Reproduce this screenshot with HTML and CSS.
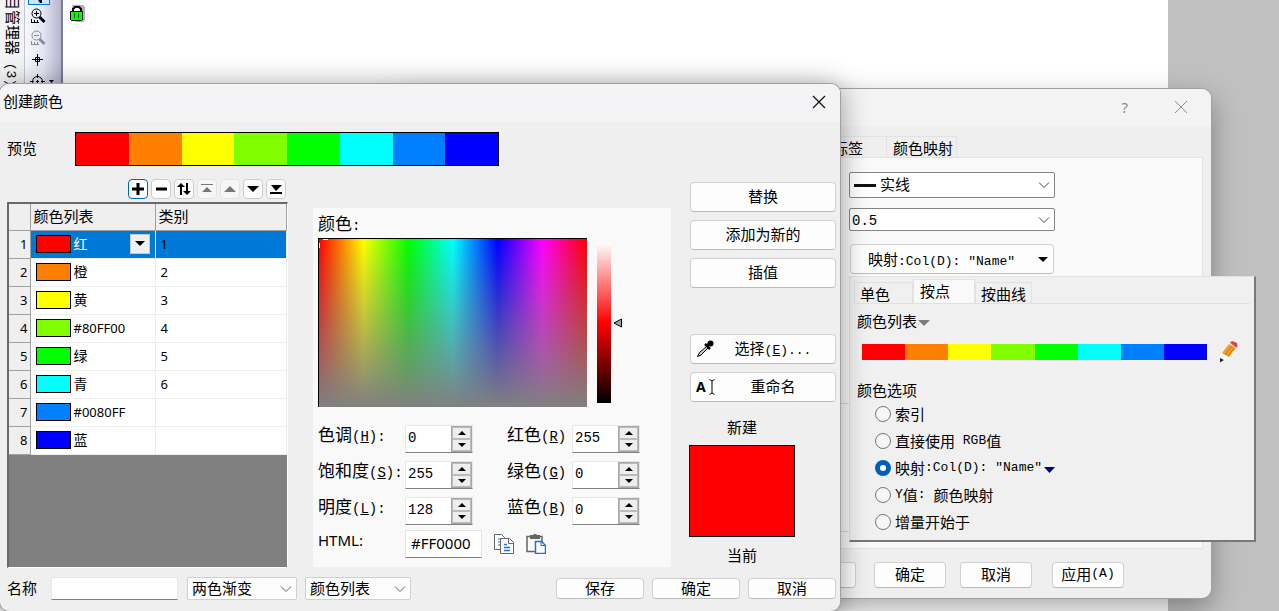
FILE: index.html
```html
<!DOCTYPE html>
<html lang="zh-CN">
<head>
<meta charset="utf-8">
<title>创建颜色</title>
<link rel="stylesheet" href="styles.css">
</head>
<body>
<div class="desktop">
  <div class="app">
    <div class="dock">目管理器<span class="mono"> (3)</span></div>
    <div class="tools">
      <span class="tool-on"><svg width="8" height="8" viewBox="0 0 8 8"><path d="M3 0h4v3H5z" fill="#000"/></svg></span>
      <svg width="18" height="20" viewBox="0 0 18 20" fill="none" stroke="#000"><circle cx="6.500" cy="6.500" r="4.500"/><path d="M4 6.500h5M6.500 4v5"/><path d="M9.500 10l5 5" stroke-width="3"/><path d="M1.500 12v4M1 15.500h8M4.500 13v2M7.500 13v2"/></svg>
      <svg width="18" height="20" viewBox="0 0 18 20" fill="none" stroke="#8a8a98"><circle cx="6.500" cy="6.500" r="4.500"/><path d="M4 6.500h5"/><path d="M9.500 10l5 5" stroke-width="3"/><path d="M1.500 12v4M1 15.500h8M4.500 13v2M7.500 13v2"/></svg>
      <svg width="18" height="20" viewBox="0 0 18 20" fill="none" stroke="#000"><path d="M2 8.500h11M7.500 3v12M5.500 6.500h4v4h-4z"/></svg>
      <svg width="28" height="20" viewBox="0 0 28 20" fill="none" stroke="#000"><circle cx="7.500" cy="8.500" r="5"/><path d="M0 8.500h4M6 8.500h3M11 8.500h4M7.500 1v4M7.500 7v3M7.500 12v4"/><path d="M19 7h5l-2.500 3z" fill="#000" stroke="none"/></svg>
    </div>
    <div class="sheet">
      <svg width="17" height="17" viewBox="0 0 17 17"><path d="M3 0h11l2 2v13l-2 2H6z" fill="#b0b0b0"/><path d="M4 7V4l2-2h4l2 2v3" fill="#fff" stroke="#000" stroke-width="2"/><path d="M1.500 6.500h12v8l-1 1h-10l-1-1z" fill="#0f0" stroke="#000"/><path d="M5.500 8v5M9.500 8v5" stroke="#052"/></svg>
    </div>
    <div class="workspace"></div>
  </div>

  <section class="window plot" aria-label="绘图细节">
    <header class="plot-title">
      <button class="bare help" aria-label="帮助">?</button>
      <button class="bare" aria-label="关闭"><svg width="14" height="14" viewBox="0 0 14 14"><path d="M1 1l12 12M13 1L1 13" stroke="#8c8c8c" fill="none"/></svg></button>
    </header>
    <nav class="plot-tabs">
      <button class="ptab label-tab">标签</button><button class="ptab">颜色映射</button>
    </nav>
    <div class="plot-page">
      <div class="plot-fields">
        <div class="combo dark tall"><select aria-label="样式" class="line-select"><option>实线</option></select>
          <i class="line-sample"></i>
          <svg class="chev" width="12" height="8" viewBox="0 0 12 8"><path d="M1 1.500l5 5 5-5" fill="none" stroke="#444"/></svg></div>
        <div class="combo dark"><select aria-label="宽度" class="mono"><option>0.5</option></select>
          <svg class="chev" width="12" height="8" viewBox="0 0 12 8"><path d="M1 1.500l5 5 5-5" fill="none" stroke="#444"/></svg></div>
        <button class="btn map-btn"><span>映射<span class="mono">:Col(D): "Name"</span></span><svg width="10" height="5" viewBox="0 0 10 5"><path d="M0 0h10L5 5z"/></svg></button>
      </div>
      <div class="plot-group"></div>
    </div>
    <footer class="plot-foot">
      <button class="btn">&nbsp;</button>
      <button class="btn">确定</button>
      <button class="btn second">取消</button>
      <button class="btn apply">应用<span class="mono">(A)</span></button>
    </footer>
  </section>

  <section class="popup" aria-label="颜色">
    <nav class="pop-tabs">
      <button class="pop-tab">单色</button><button class="pop-tab active">按点</button><button class="pop-tab">按曲线</button>
    </nav>
    <button class="bare list-menu">颜色列表<svg width="12" height="6" viewBox="0 0 12 6"><path d="M0 0h12L6 6z" fill="#7c7c7c"/></svg></button>
    <div class="ramp-row">
      <div class="ramp"><i class="red"></i><i class="orange"></i><i class="yellow"></i><i class="lime"></i><i class="green"></i><i class="cyan"></i><i class="azure"></i><i class="blue"></i></div>
      <button class="bare" aria-label="编辑"><svg width="20" height="22" viewBox="0 0 20 22"><path d="M1 15l3-3 6 4-5 4-4 1z" fill="#fff"/><path d="M3 12L10 3l7 4-7 9z" fill="#f0a020"/><path d="M6 14l7-9M9 15l6-8" stroke="#c87810"/><path d="M10 3l2-1.500 6 3.500-1 2z" fill="#ead9c8"/><path d="M11 1.500L13 0l5 2 .500 4-1.500.500z" fill="#e04040"/><path d="M1 17l4 2-4 2.500z" fill="#222"/></svg></button>
    </div>
    <fieldset class="options">
      <legend>颜色选项</legend>
      <label><input type="radio" name="opt">索引</label>
      <label><input type="radio" name="opt">直接使用<span class="mono"> RGB</span>值</label>
      <label><input type="radio" name="opt" checked>映射<span class="mono">:Col(D): "Name"</span><svg width="11" height="6" viewBox="0 0 11 6"><path d="M0 0h11L5.500 6z" fill="#000080"/></svg></label>
      <label><input type="radio" name="opt"><span class="mono">Y</span>值<span class="mono">: </span>颜色映射</label>
      <label><input type="radio" name="opt">增量开始于</label>
    </fieldset>
  </section>

  <section class="window create" aria-label="创建颜色">
    <header class="create-title"><span>创建颜色</span>
      <button class="bare" aria-label="关闭"><svg width="14" height="14" viewBox="0 0 14 14"><path d="M1 1l12 12M13 1L1 13" stroke="#111" fill="none" stroke-width="1.200"/></svg></button>
    </header>
    <div class="create-body">
      <div class="preview"><span>预览</span>
        <div class="ramp framed"><i class="red"></i><i class="orange"></i><i class="yellow"></i><i class="lime"></i><i class="green"></i><i class="cyan"></i><i class="azure"></i><i class="blue"></i></div>
      </div>
      <div class="main">
        <div class="left">
          <div class="list-tools">
            <button class="tb focus" aria-label="添加"><svg width="12" height="12"><path d="M0 6h12M6 0v12" stroke="#000" stroke-width="3"/></svg></button>
            <button class="tb" aria-label="删除"><svg width="12" height="12"><path d="M1 6h11" stroke="#000" stroke-width="3"/></svg></button>
            <button class="tb" aria-label="反转"><svg width="14" height="12"><path d="M4 3v9M10 0v9" stroke="#000" stroke-width="2"/><path d="M0 4l4-4 4 4zM6 8l4 4 4-4z"/></svg></button>
            <button class="tb" aria-label="移到顶部" disabled><svg width="12" height="12" fill="#777"><path d="M0 1h12v1H0zM1 9l5-5 5 5z"/></svg></button>
            <button class="tb" aria-label="上移" disabled><svg width="12" height="12" fill="#777"><path d="M0 9l6-6 6 6z"/></svg></button>
            <button class="tb" aria-label="下移"><svg width="12" height="12"><path d="M0 3h12L6 9z"/></svg></button>
            <button class="tb" aria-label="移到底部"><svg width="12" height="12"><path d="M1 2h11L6 8zM0 9h12v2H0z"/></svg></button>
          </div>
          <div class="list-box">
            <table>
              <colgroup><col class="c-num"><col class="c-name"><col></colgroup>
              <thead><tr><th></th><th>颜色列表</th><th>类别</th></tr></thead>
              <tbody>
                <tr class="sel"><th>1</th><td><div class="cell"><i class="chip red"></i>红<button class="drop" aria-label="选择颜色"><svg width="10" height="5"><path d="M0 0h10L5 5z"/></svg></button></div></td><td>1</td></tr>
                <tr><th>2</th><td><div class="cell"><i class="chip orange"></i>橙</div></td><td>2</td></tr>
                <tr><th>3</th><td><div class="cell"><i class="chip yellow"></i>黄</div></td><td>3</td></tr>
                <tr><th>4</th><td><div class="cell"><i class="chip lime"></i><span class="code">#80FF00</span></div></td><td>4</td></tr>
                <tr><th>5</th><td><div class="cell"><i class="chip green"></i>绿</div></td><td>5</td></tr>
                <tr><th>6</th><td><div class="cell"><i class="chip cyan"></i>青</div></td><td>6</td></tr>
                <tr><th>7</th><td><div class="cell"><i class="chip azure"></i><span class="code">#0080FF</span></div></td><td></td></tr>
                <tr><th>8</th><td><div class="cell"><i class="chip blue"></i>蓝</div></td><td></td></tr>
              </tbody>
            </table>
          </div>
        </div>

        <div class="picker">
          <div class="picker-label">颜色<span class="mono">:</span></div>
          <div class="picker-row">
            <div class="spectrum"><i class="mark-top"></i><i class="mark-left"></i></div>
            <div class="lum"></div>
            <svg width="10" height="10" viewBox="0 0 10 10"><path d="M1 5l7.500-4v8z" fill="#a0a0a0" stroke="#000"/></svg>
          </div>
          <div class="fields">
            <label for="h">色调<span class="mono">(<u>H</u>):</span></label>
            <div class="spin"><input id="h" class="mono" value="0"><div class="arrows"><button aria-label="增加"><svg width="8" height="4"><path d="M0 4h8L4 0z"/></svg></button><button aria-label="减少"><svg width="8" height="4"><path d="M0 0h8L4 4z"/></svg></button></div></div>
            <label for="r">红色<span class="mono">(<u>R</u>)</span></label>
            <div class="spin"><input id="r" class="mono" value="255"><div class="arrows"><button aria-label="增加"><svg width="8" height="4"><path d="M0 4h8L4 0z"/></svg></button><button aria-label="减少"><svg width="8" height="4"><path d="M0 0h8L4 4z"/></svg></button></div></div>
            <label for="s">饱和度<span class="mono">(<u>S</u>):</span></label>
            <div class="spin"><input id="s" class="mono" value="255"><div class="arrows"><button aria-label="增加"><svg width="8" height="4"><path d="M0 4h8L4 0z"/></svg></button><button aria-label="减少"><svg width="8" height="4"><path d="M0 0h8L4 4z"/></svg></button></div></div>
            <label for="g">绿色<span class="mono">(<u>G</u>)</span></label>
            <div class="spin"><input id="g" class="mono" value="0"><div class="arrows"><button aria-label="增加"><svg width="8" height="4"><path d="M0 4h8L4 0z"/></svg></button><button aria-label="减少"><svg width="8" height="4"><path d="M0 0h8L4 4z"/></svg></button></div></div>
            <label for="l">明度<span class="mono">(<u>L</u>):</span></label>
            <div class="spin"><input id="l" class="mono" value="128"><div class="arrows"><button aria-label="增加"><svg width="8" height="4"><path d="M0 4h8L4 0z"/></svg></button><button aria-label="减少"><svg width="8" height="4"><path d="M0 0h8L4 4z"/></svg></button></div></div>
            <label for="b">蓝色<span class="mono">(<u>B</u>)</span></label>
            <div class="spin"><input id="b" class="mono" value="0"><div class="arrows"><button aria-label="增加"><svg width="8" height="4"><path d="M0 4h8L4 0z"/></svg></button><button aria-label="减少"><svg width="8" height="4"><path d="M0 0h8L4 4z"/></svg></button></div></div>
          </div>
          <div class="html-row">
            <label for="hex">HTML:</label>
            <input id="hex" value="#FF0000">
            <button class="bare" aria-label="复制"><svg width="20" height="20" viewBox="0 0 20 20"><path d="M.5.500h7l3 3v12h-10z" fill="#fff" stroke="#666"/><path d="M4 5h3M4 8h2M4 11h2" stroke="#1f6fd6"/><path d="M6.500 4.500h9l4 4v11h-13z" fill="#fff" stroke="#666"/><path d="M14.500 4.500v5h5" fill="none" stroke="#666"/><path d="M10 10.500h3M10 13.500h6M10 16.500h6" stroke="#1f6fd6" stroke-width="1.500"/></svg></button>
            <button class="bare" aria-label="粘贴"><svg width="20" height="20" viewBox="0 0 20 20"><path d="M1 2.500h15v15H1z" fill="#fafafa" stroke="#666" stroke-width="1.500"/><path d="M4 1h3l1-1h2l1 1h3v4H4z" fill="#666"/><path d="M9.500 7.500h6l4 4v8h-10z" fill="#fff" stroke="#1f6fd6" stroke-width="1.500"/><path d="M15 7.500v4h4" fill="none" stroke="#1f6fd6"/></svg></button>
          </div>
        </div>

        <div class="side">
          <button class="btn">替换</button>
          <button class="btn">添加为新的</button>
          <button class="btn">插值</button>
          <button class="btn icon-btn pick"><svg width="18" height="18" viewBox="0 0 18 18"><path d="M1.500 16.500l2-4 7-6 1.500 1.500-7 7z" fill="#ccc" stroke="#000"/><path d="M9 4l5 5M11 6l4-4" stroke="#000" stroke-width="2.500"/><circle cx="14.500" cy="3.500" r="3"/></svg><span>选择<span class="mono">(<u>E</u>)...</span></span></button>
          <button class="btn icon-btn"><span class="glyph" aria-hidden="true">A<svg width="6" height="16" viewBox="0 0 6 16"><path d="M.5.500l2.500 1.500L5.500.500M3 2v12M.5 15.500L3 14l2.500 1.500" fill="none" stroke="#000"/></svg></span><span>重命名</span></button>
          <div class="compare"><span>新建</span><div class="current"></div><span>当前</span></div>
        </div>
      </div>
      <footer class="create-foot">
        <label for="nm">名称</label><input id="nm">
        <div class="combo grad"><select aria-label="渐变"><option>两色渐变</option></select><svg class="chev" width="12" height="8" viewBox="0 0 12 8"><path d="M1 1.500l5 5 5-5" fill="none" stroke="#666"/></svg></div>
        <div class="combo kind"><select aria-label="类型"><option>颜色列表</option></select><svg class="chev" width="12" height="8" viewBox="0 0 12 8"><path d="M1 1.500l5 5 5-5" fill="none" stroke="#666"/></svg></div>
        <div class="actions"><button class="btn">保存</button><button class="btn">确定</button><button class="btn">取消</button></div>
      </footer>
    </div>
  </section>
</div>
</body>
</html>
```
FILE: styles.css
```css
* { box-sizing: border-box; }
body, button, input, select {
  font-family: "Noto Sans", "Noto Sans CJK SC", sans-serif;
  font-size: 15px;
  color: #000;
}
body { margin: 0; line-height: 20px; }
button, input, select { margin: 0; padding: 0; border: 0; background: none; border-radius: 0; }
svg { display: block; flex: none; }
i { display: block; }
.mono { font-family: "Liberation Mono", monospace; font-size: 13px; white-space: pre; }
.bare { display: flex; align-items: center; }

.red { background: #f00; }
.orange { background: #ff8000; }
.yellow { background: #ff0; }
.lime { background: #80ff00; }
.green { background: #0f0; }
.cyan { background: #0ff; }
.azure { background: #0080ff; }
.blue { background: #00f; }

.desktop { position: relative; height: 100vh; overflow: hidden; background: #c0c0c0; }

/* application behind the dialogs */
.app { display: flex; height: 100%; }
.dock {
  width: 25px; background: #f3f3f3; border-right: 1px solid #c4c4d0;
  writing-mode: vertical-rl; text-orientation: sideways; line-height: 22px;
  text-indent: -5px; white-space: nowrap;
}
.tools {
  width: 38px; display: flex; flex-direction: column; align-items: flex-start; gap: 2px; padding-left: 3px;
  background: linear-gradient(90deg, #f6f8fc, #e4e6f2 50%, #b4b4ce);
  border-right: 2px solid #7c7c90;
}
.tools > svg { margin-left: 2px; }
.tool-on { width: 22px; height: 5px; display: flex; justify-content: center; border: 1px solid #0078d7; border-top: 0; background: #cce4f7; }
.sheet { flex: 1; background: #fff; padding: 5px 6px; }
.workspace { width: 111px; background: #c0c0c0; }

.window { position: absolute; background: #efefef; border-radius: 9px; }

/* shared controls */
.btn {
  display: flex; align-items: center; justify-content: center; padding-bottom: 3px;
  background: #fdfdfd; border: 1px solid #d0d0d0; border-bottom-color: #bcbcbc; border-radius: 4px;
}
.ramp { display: flex; flex: 1; height: 16px; }
.ramp i { flex: 1; }
.combo { position: relative; height: 23px; background: #fdfdfd; border: 1px solid #d0d0d0; border-radius: 2px; }
.combo select { appearance: none; width: 100%; height: 100%; padding: 0 0 2px 4px; line-height: 20px; }
.combo .chev { position: absolute; right: 4px; top: 50%; margin-top: -4px; pointer-events: none; }
.combo.dark { background: #fff; border-color: #858585; }
.combo.dark select { padding-left: 2px; }
.combo.dark select.mono { font-size: 14px; }

/* plot details dialog */
.plot { top: 89px; left: 400px; width: 811px; box-shadow: 0 0 0 1px #a0a0a0, 0 10px 28px rgba(0,0,0,.35); }
.plot-title {
  height: 37px; display: flex; justify-content: flex-end; gap: 46px; padding: 0 23px 2px 0;
  background: #f3f3f3; border-radius: 9px 9px 0 0;
}
.help { color: #8c8c8c; }
.plot-tabs { display: flex; justify-content: flex-end; padding: 10px 254px 0 0; }
.ptab { height: 21px; border: 1px solid #e2e2e2; border-bottom: 0; padding: 0 3px 2px 6px; }
.label-tab { padding-right: 23px; border-right: 0; }
.plot-page { margin-right: 8px; background: #f9f9f9; border: 1px solid #e2e2e2; padding: 14px 0 16px; }
.plot-fields { width: 206px; margin-left: 448px; display: flex; flex-direction: column; gap: 10px; }
.combo.tall { height: 26px; }
.combo.dark .line-select { padding-left: 30px; }
.line-sample { position: absolute; left: 4px; top: 11px; width: 22px; height: 3px; background: #111; }
.map-btn { height: 30px; margin: 3px 1px 0; padding: 0 5px 2px 17px; justify-content: space-between; }
.map-btn svg { margin-top: 3px; }
.plot-group { margin: 129px 20px 0; height: 129px; border: 1px solid #dcdcdc; }
.plot-foot { display: flex; justify-content: flex-end; padding: 13px 87px 10px 0; }
.plot-foot .btn { width: 72px; height: 26px; margin-right: 18px; }
.plot-foot .btn.second { margin-left: -4px; margin-right: 20px; }
.plot-foot .btn.apply { margin-right: 0; }

/* colour pop-up */
.popup {
  position: absolute; top: 276px; left: 849px; width: 407px; padding: 2px 4px 5px;
  background: #f0f0f0; border: 1px solid #e3e3e3; border-right: 2px solid #787878; border-bottom: 2px solid #787878;
}
.pop-tabs { display: flex; align-items: flex-end; border-bottom: 1px solid #e0e0e0; }
.pop-tab { height: 21px; padding: 0 5px 2px; border: 1px solid #e2e2e2; border-bottom: 0; text-align: left; }
.pop-tab:first-child { width: 59px; }
.pop-tab.active { width: 62px; height: 24px; background: #f9f9f9; padding: 0 6px 5px; }
.list-menu { height: 20px; margin: 6px 0 0 3px; gap: 1px; }
.list-menu svg { margin-top: 6px; }
.ramp-row { display: flex; align-items: center; gap: 12px; margin: 11px 11px 0 8px; }
.options { margin: 17px 0 0; padding: 0; border: 0; }
.options legend { padding: 0 0 0 3px; line-height: 20px; }
.options label { display: flex; align-items: center; height: 27px; margin-left: 21px; white-space: pre; }
.options svg { margin: 4px 0 0 2px; }
.options input {
  appearance: none; width: 16px; height: 16px; margin-right: 4px;
  border: 1px solid #777; border-radius: 50%; background: #f6f6f6;
}
.options input:checked { border: 5px solid #005fb8; background: #fff; }

/* create colour dialog */
.create { top: 84px; left: 0; width: 840px; box-shadow: 0 0 0 1px #a0a0a0, 0 2px 28px rgba(0,0,0,.4); }
.create-title {
  height: 38px; display: flex; align-items: center; justify-content: space-between;
  padding: 0 14px 2px 3px; background: #f4f3f6; border-radius: 9px 9px 0 0;
}
.create-title span { padding-bottom: 2px; }
.create-body { padding: 10px 4px 11px 7px; }
.preview { display: flex; align-items: center; gap: 38px; width: 492px; }
.preview span { padding-bottom: 3px; }
.ramp.framed { height: 34px; border: 1px solid #000; }
.main { display: flex; margin-top: 13px; }
.left { width: 281px; display: flex; flex-direction: column; gap: 3px; }
.list-tools { display: flex; justify-content: flex-end; gap: 3px; padding-right: 2px; }
.tb {
  width: 20px; height: 20px; display: flex; align-items: center; justify-content: center;
  background: #fdfdfd; border: 1px solid #ccc; border-radius: 4px;
}
.tb.focus { border-color: #0067c0; }
.tb:disabled { background: #f6f6f6; border-color: #e4e4e4; }
.list-box { flex: 1; background: #808080; border: 2px solid #696969; border-right: 1px solid #fff; border-bottom: 1px solid #fff; }
table { width: 100%; table-layout: fixed; border-collapse: collapse; font-size: 14px; }
.c-num { width: 21px; }
.c-name { width: 125px; }
th, td { padding: 0; text-align: left; font-weight: 400; line-height: 20px; }
th { background: #efefef; border-right: 1px solid #a0a0a0; border-bottom: 1px solid #a0a0a0; font-size: 13px; }
thead th { height: 26px; font-size: 15px; padding: 0 0 2px 3px; }
tbody th { text-align: right; padding-right: 2px; }
td { height: 28px; background: #fff; border-right: 1px solid #eee; border-bottom: 1px solid #eee; padding: 0 5px 1px; font-size: 13px; }
.cell { display: flex; align-items: center; gap: 3px; font-size: 14px; white-space: nowrap; }
.code { font-size: 13px; }
.chip { width: 35px; height: 18px; border: 1px solid #000; }
.sel td { background: #0078d7; }
.sel .cell { color: #fff; }
.drop { width: 20px; height: 20px; margin-left: auto; background: #f0f0f0; border: 1px solid #ccc; display: flex; align-items: center; justify-content: center; }

.picker { width: 358px; margin: 29px 0 1px 25px; padding: 0 5px 9px; background: #f9f9f9; font-size: 17px; }
.picker .mono { font-size: 14px; }
.picker-label { height: 30px; line-height: 32px; }
.picker-row { display: flex; align-items: center; }
.spectrum {
  position: relative; width: 269px; height: 169px; border: 1px solid #000; border-right: 0; border-bottom: 0;
  background: linear-gradient(rgba(128,128,128,0), #808080), linear-gradient(90deg, #f00, #ff0, #0f0, #0ff, #00f, #f0f, #f00);
}
.mark-top, .mark-left { position: absolute; background: #fff; }
.mark-top { left: 4px; top: 0; width: 5px; height: 1px; }
.mark-left { left: 0; top: 4px; width: 1px; height: 5px; }
.lum { width: 14px; height: 161px; margin: 0 2px 0 10px; background: linear-gradient(#fff, #f00 50%, #000); }
.fields { display: grid; grid-template-columns: 87px 102px 65px 68px; row-gap: 8px; margin-top: 18px; }
.fields label, .html-row label { line-height: 20px; white-space: nowrap; }
.spin { width: 68px; height: 28px; display: flex; background: #fff; border: 1px solid #e8e8e8; border-bottom-color: #808080; }
.spin input { width: 45px; padding: 0 0 2px 2px; }
.arrows { flex: 1; display: flex; flex-direction: column; border: 1px solid #a8a8a8; background: #eee; }
.arrows button { flex: 1; display: flex; align-items: center; justify-content: center; border: 1px solid #bbb; }
.html-row { display: flex; margin-top: 5px; }
.html-row label { width: 87px; font-size: 15px; }
.html-row input { width: 77px; height: 28px; background: #fff; border: 1px solid #e4e4e4; border-bottom-color: #808080; padding: 0 0 3px 5px; margin-right: 12px; }
.html-row .bare { margin-right: 12px; }

.side { flex: 1; display: flex; flex-direction: column; gap: 8px; margin: 3px 0 0 19px; }
.side .btn { height: 30px; }
.side .pick { margin-top: 38px; }
.side .icon-btn { position: relative; padding-left: 20px; }
.icon-btn > svg, .glyph { position: absolute; left: 5px; top: 5px; }
.glyph { display: flex; align-items: center; gap: 3px; font-size: 14px; font-weight: 700; line-height: 18px; }
.compare { width: 106px; margin-top: 7px; margin-left: -1px; display: flex; flex-direction: column; align-items: center; gap: 8px; }
.current { width: 106px; height: 92px; background: #f00; border: 1px solid #000; }

.create-foot { display: flex; align-items: center; margin-top: 9px; }
.create-foot > label { padding-bottom: 2px; }
.create-foot > input { width: 127px; height: 23px; margin: 0 9px 0 14px; background: #fff; border: 1px solid #e8e8e8; border-bottom-color: #808080; }
.grad { width: 110px; margin-right: 8px; }
.kind { width: 106px; }
.actions { margin-left: auto; display: flex; gap: 8px; }
.actions .btn { width: 88px; height: 21px; }
```
